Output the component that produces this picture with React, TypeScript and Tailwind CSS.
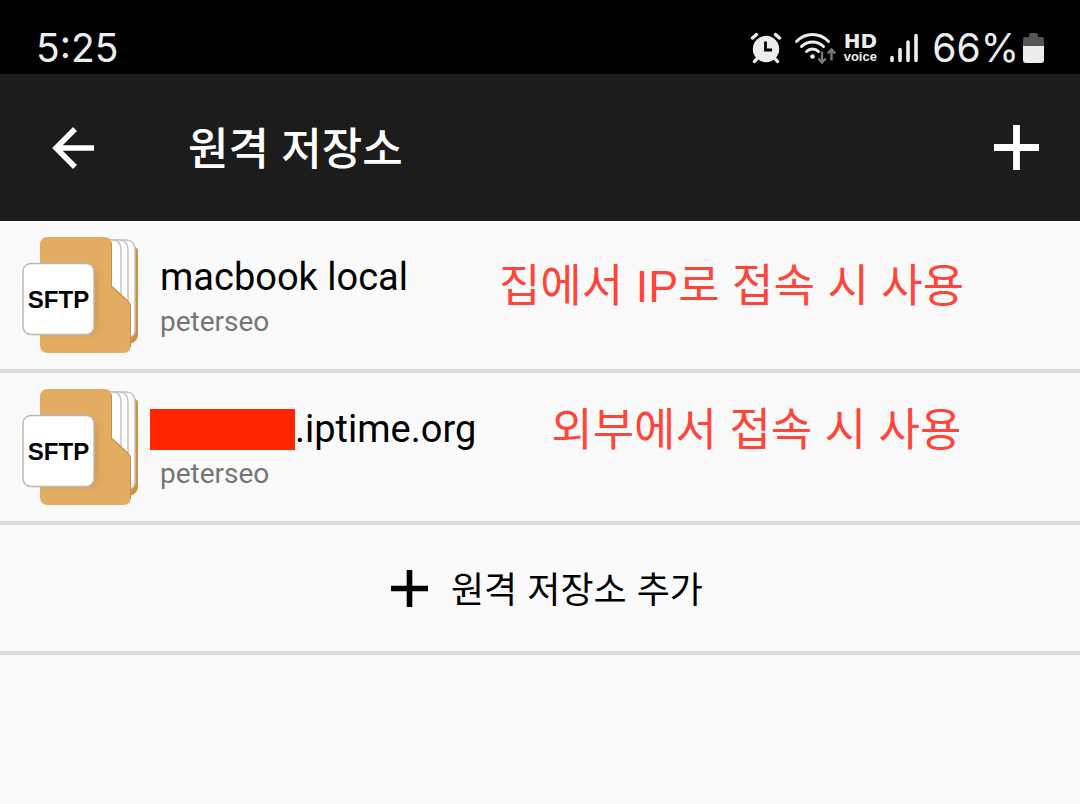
import React from 'react';

type Storage = {
  id: string;
  host: string;
  user: string;
  redacted?: boolean;
  note: string;
  noteClass: string;
};

const storages: Storage[] = [
  {
    id: 'local',
    host: 'macbook local',
    user: 'peterseo',
    note: '집에서 IP로 접속 시 사용',
    noteClass: 'ml-[91px] mt-5',
  },
  {
    id: 'iptime',
    host: '.iptime.org',
    user: 'peterseo',
    redacted: true,
    note: '외부에서 접속 시 사용',
    noteClass: 'ml-[75px] mt-3',
  },
];

const AlarmIcon = () => (
  <svg className="h-8 w-8" viewBox="0 0 32 32" aria-hidden="true">
    <path
      d="M2.500 6 6.500 2.500M29.500 6 25.500 2.500M7.500 26l-3 3.500M24.500 26l3 3.500"
      stroke="#eceeee"
      strokeWidth="3.400"
      strokeLinecap="round"
    />
    <circle cx="16" cy="17" r="13.200" fill="#eceeee" />
    <path d="M15.500 9.500v8.500H22" fill="none" stroke="#000" strokeWidth="2.800" />
  </svg>
);

const WifiIcon = () => (
  <svg className="h-8 w-[42px]" viewBox="0 0 42 32" aria-hidden="true">
    <g fill="none" stroke="#eceeee" strokeWidth="3" strokeLinecap="round">
      <path d="M2.500 9.500c9-9.300 23-9.300 32 0" />
      <path d="M7.500 14.500c6.200-6 15.800-6 22 0" />
      <path d="M12.500 19.500c3.400-3.300 8.600-3.300 12 0" />
    </g>
    <circle cx="18.500" cy="24.500" r="2.300" fill="#eceeee" />
    <g fill="none" stroke="#777" strokeWidth="2.400">
      <path d="M28 19.500V30M24.300 26.500l3.700 4 3.700-4" />
      <path d="M37.500 28.500V18M33.800 21.500l3.700-4 3.700 4" />
    </g>
  </svg>
);

const SignalIcon = () => (
  <svg className="h-8 w-7" viewBox="0 0 28 32" aria-hidden="true">
    <g stroke="#eceeee" strokeWidth="3.600" strokeLinecap="round">
      <path d="M2 28.500v-3M10 28.500v-11M18 28.500V10M26 28.500V3.500" />
    </g>
  </svg>
);

const BatteryIcon = () => (
  <svg className="h-[30px] w-[21px]" viewBox="0 0 21 30" aria-hidden="true">
    <path d="M0 13V6q0-2 2-2h4V2q0-2 2-2h5q2 0 2 2v2h4q2 0 2 2v7z" fill="#555" />
    <path d="M0 13h21v14q0 3-3 3H3q-3 0-3-3z" fill="#eceeee" />
  </svg>
);

const BackIcon = () => (
  <svg className="h-[42px] w-[43px]" viewBox="0 0 43 42" aria-hidden="true">
    <path d="M23 2 4 21l19 19M4 21h38" fill="none" stroke="#fff" strokeWidth="5.500" />
  </svg>
);

const PlusIcon = ({ className }: { className: string }) => (
  <svg className={className} viewBox="0 0 45 45" aria-hidden="true">
    <path d="M22.500 0v45M0 22.500h45" stroke="currentColor" strokeWidth="6.800" />
  </svg>
);

const SftpFolderIcon = ({ id }: { id: string }) => (
  <svg className="h-[116px] w-[116px] shrink-0" viewBox="0 0 116 116" role="img" aria-label="SFTP">
    <defs>
      <clipPath id={`front-${id}`}>
        <path d="M26 0h56q8 0 8 8v41l16 14.500q3 3 3 6V108q0 8-8 8H26q-8 0-8-8V8q0-8 8-8z" />
      </clipPath>
      <filter id={`shade-${id}`} x="-20%" y="-20%" width="150%" height="150%">
        <feGaussianBlur stdDeviation="3.500" />
      </filter>
    </defs>
    <path d="M80 10h32q4 0 4 5v82q0 9-10 10H80z" fill="#cf9040" />
    <g fill="#fff" stroke="#c4c4c4" strokeWidth="1.500">
      <path d="M80 3h24q9 0 9 10v80q0 6-5 7H80z" />
      <path d="M80 3h17q9 0 9 10v80H80z" />
      <path d="M80 3h10q9 0 9 10v80H80z" />
    </g>
    <g clipPath={`url(#front-${id})`}>
      <path d="M18 0h98v116H18z" fill="#e2ad62" />
      <rect x="4" y="31" width="71" height="66" rx="8" fill="#b97728" opacity="0.4" filter={`url(#shade-${id})`} />
      <path d="M90 6v43l16 14.500q3 3 3 6V110" fill="none" stroke="#d08a45" strokeWidth="2" />
    </g>
    <rect x="1" y="26.500" width="71" height="71" rx="8" fill="#fff" stroke="#b9b9b9" strokeWidth="1.500" />
    <text x="36.500" y="70.500" textAnchor="middle" className="fill-black font-['Liberation_Sans',sans-serif] text-[24px] font-bold">
      SFTP
    </text>
  </svg>
);

const StatusBar = () => (
  <div className="flex h-[74px] items-center justify-between bg-black pt-[22px] pr-9 pl-9 text-[#eceeee]">
    <span className="font-['Inter',sans-serif] text-[39px] leading-[52px]">5:25</span>
    <div className="flex items-center">
      <AlarmIcon />
      <div className="ml-3">
        <WifiIcon />
      </div>
      <div className="ml-1.5 flex w-9 flex-col items-center pb-px font-bold">
        <span className="font-['DejaVu_Sans',sans-serif] text-[20px] leading-[17px]">HD</span>
        <span className="font-['Liberation_Sans',sans-serif] text-[13px] leading-[13px]">voice</span>
      </div>
      <div className="ml-3">
        <SignalIcon />
      </div>
      <span className="ml-3.5 font-['Inter',sans-serif] text-[39px] leading-[52px]">66%</span>
      <div className="ml-1">
        <BatteryIcon />
      </div>
    </div>
  </div>
);

const StorageRow = ({ storage }: { storage: Storage }) => (
  <li className="flex border-b-4 border-[#dcdcdc] py-4 pl-[22px]">
    <SftpFolderIcon id={storage.id} />
    <div className="ml-3 shrink-0 pt-[20px] font-['Roboto',sans-serif]">
      <div className="flex h-[41px] items-center text-[38px] leading-[41px] text-black">
        {storage.redacted ? <span className="h-[41px] w-[145px] bg-[#ff2600]" /> : <span className="w-2.5" />}
        <span>{storage.host}</span>
      </div>
      <div className="mt-2 pl-2.5 text-[28px] leading-8 text-[#757575]">{storage.user}</div>
    </div>
    <p
      className={`-mb-4 h-[60px] font-['Liberation_Sans','Noto_Sans_CJK_KR',sans-serif] text-[45px] leading-[60px] whitespace-nowrap text-[#ff4539] ${storage.noteClass}`}
    >
      {storage.note}
    </p>
  </li>
);

const App = () => {
  return (
    <div lang="ko" className="min-h-screen bg-[#fafafa]">
      <StatusBar />

      {/* App bar */}
      <header className="flex h-[147px] items-center bg-[#1c1c1c] pr-[41px] pl-[52px] text-white">
        <button type="button" aria-label="뒤로">
          <BackIcon />
        </button>
        <h1 className="ml-[93px] flex-1 pb-1 font-['Noto_Sans_CJK_KR',sans-serif] text-[44px] leading-[60px] font-medium">
          원격 저장소
        </h1>
        <button type="button" aria-label="추가">
          <PlusIcon className="h-[45px] w-[45px]" />
        </button>
      </header>

      <ul>
        {storages.map(storage => (
          <StorageRow key={storage.id} storage={storage} />
        ))}
      </ul>

      <button
        type="button"
        className="flex h-[130px] w-full items-center justify-center gap-[23px] border-b-4 border-[#dcdcdc] pl-3.5 text-black"
      >
        <PlusIcon className="h-[37px] w-[37px]" />
        <span className="pb-0.5 font-['Noto_Sans_CJK_KR',sans-serif] text-[36px] leading-[48px]">원격 저장소 추가</span>
      </button>
    </div>
  );
};

export default App;
